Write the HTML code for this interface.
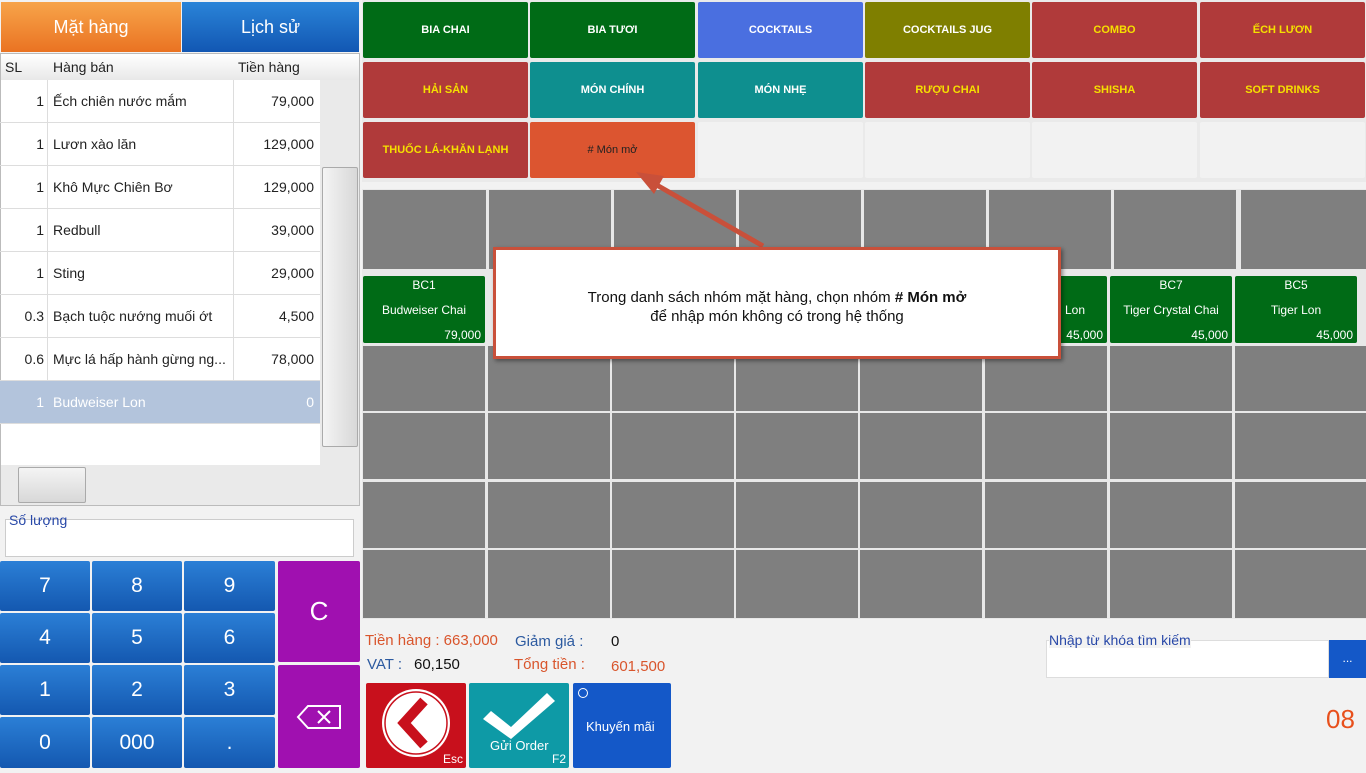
<!DOCTYPE html>
<html><head><meta charset="utf-8"><style>
*{box-sizing:border-box;margin:0;padding:0}
body{width:1366px;height:768px;background:#f2f2f2;position:relative;overflow:hidden;font-family:"Liberation Sans","DejaVu Sans",sans-serif}
.a{position:absolute}
.tab{display:flex;align-items:center;justify-content:center;color:#fff;font-size:18px}
.cat{position:absolute;width:165px;height:56px;display:flex;align-items:center;justify-content:center;font-size:11px;font-weight:bold;text-align:center;border-radius:2px}
.row{position:absolute;left:0;width:320px;height:43px;border-bottom:1px solid #ddd;font-size:14px;color:#222}
.row span{position:absolute;top:13px}
.k{position:absolute;width:90px;height:50px;background:linear-gradient(#2b7fd6,#1458b0);color:#fff;font-size:21px;display:flex;align-items:center;justify-content:center;border-radius:2px}
.it{position:absolute;width:122px;height:67px;background:#006b16;color:#fff;font-size:12px;border-radius:2px}
.it div{position:absolute;width:100%;text-align:center}
</style></head><body>
<div class="a tab" style="left:1px;top:2px;width:180px;height:50px;background:linear-gradient(#f7a44a,#ea7322)">Mặt hàng</div>
<div class="a tab" style="left:182px;top:2px;width:177px;height:50px;background:linear-gradient(#2a84d8,#1257b3)">Lịch sử</div>
<div class="a" style="left:0;top:53px;width:360px;height:453px;background:#fff;border:1px solid #bbb"></div>
<div class="a" style="left:1px;top:54px;width:358px;height:26px;background:linear-gradient(#fff,#e8e8e8);font-size:14px;color:#222">
<span class="a" style="left:4px;top:5px">SL</span><span class="a" style="left:52px;top:5px">Hàng bán</span><span class="a" style="left:237px;top:5px">Tiền hàng</span></div>
<div class="a" style="left:47px;top:80px;width:1px;height:344px;background:#ddd"></div>
<div class="a" style="left:233px;top:80px;width:1px;height:344px;background:#ddd"></div>
<div class="row" style="top:80px"><span style="right:276px">1</span><span style="left:53px">Ếch chiên nước mắm</span><span style="right:6px">79,000</span></div>
<div class="row" style="top:123px"><span style="right:276px">1</span><span style="left:53px">Lươn xào lăn</span><span style="right:6px">129,000</span></div>
<div class="row" style="top:166px"><span style="right:276px">1</span><span style="left:53px">Khô Mực Chiên Bơ</span><span style="right:6px">129,000</span></div>
<div class="row" style="top:209px"><span style="right:276px">1</span><span style="left:53px">Redbull</span><span style="right:6px">39,000</span></div>
<div class="row" style="top:252px"><span style="right:276px">1</span><span style="left:53px">Sting</span><span style="right:6px">29,000</span></div>
<div class="row" style="top:295px"><span style="right:276px">0.3</span><span style="left:53px">Bạch tuộc nướng muối ớt</span><span style="right:6px">4,500</span></div>
<div class="row" style="top:338px"><span style="right:276px">0.6</span><span style="left:53px">Mực lá hấp hành gừng ng...</span><span style="right:6px">78,000</span></div>
<div class="row" style="top:381px;background:#b3c4dc;color:#fff"><span style="right:276px">1</span><span style="left:53px">Budweiser Lon</span><span style="right:6px">0</span></div>
<div class="a" style="left:320px;top:80px;width:39px;height:425px;background:#eaeaea"></div>
<div class="a" style="left:322px;top:167px;width:36px;height:280px;background:linear-gradient(90deg,#f4f4f4,#d8d8d8);border:1px solid #aaa;border-radius:2px"></div>
<div class="a" style="left:1px;top:465px;width:319px;height:40px;background:#eaeaea"></div>
<div class="a" style="left:18px;top:467px;width:68px;height:36px;background:linear-gradient(#f4f4f4,#d8d8d8);border:1px solid #aaa;border-radius:2px"></div>
<div class="a" style="left:5px;top:519px;width:349px;height:38px;background:#fff;border:1px solid #ccc"></div>
<div class="a" style="left:9px;top:512px;font-size:14px;color:#2848a8">Số lượng</div>
<div class="k" style="left:0;top:561px">7</div><div class="k" style="left:92px;top:561px">8</div><div class="k" style="left:184px;top:561px;width:91px">9</div>
<div class="k" style="left:0;top:613px">4</div><div class="k" style="left:92px;top:613px">5</div><div class="k" style="left:184px;top:613px;width:91px">6</div>
<div class="k" style="left:0;top:665px">1</div><div class="k" style="left:92px;top:665px">2</div><div class="k" style="left:184px;top:665px;width:91px">3</div>
<div class="k" style="left:0;top:717px;height:51px">0</div><div class="k" style="left:92px;top:717px;height:51px">000</div><div class="k" style="left:184px;top:717px;width:91px;height:51px">.</div>
<div class="k" style="left:278px;top:561px;width:82px;height:101px;background:#a010b0;font-size:26px">C</div>
<div class="k" style="left:278px;top:665px;width:82px;height:103px;background:#a010b0"><svg width="46" height="26"><path d="M2 13 L12 2 H44 V24 H12 Z" fill="none" stroke="#fff" stroke-width="2"/><path d="M22 7 L34 19 M34 7 L22 19" stroke="#fff" stroke-width="2"/></svg></div>

<div class="a" style="left:362px;top:0;width:1004px;height:182px;background:#eaeaea"></div>
<div class="cat" style="left:363px;top:2px;background:#006b16;color:#fff">BIA CHAI</div>
<div class="cat" style="left:530px;top:2px;background:#006b16;color:#fff">BIA TƯƠI</div>
<div class="cat" style="left:698px;top:2px;background:#4a6fe0;color:#fff">COCKTAILS</div>
<div class="cat" style="left:865px;top:2px;background:#7f7f00;color:#fff">COCKTAILS JUG</div>
<div class="cat" style="left:1032px;top:2px;background:#b03a3a;color:#f5e000">COMBO</div>
<div class="cat" style="left:1200px;top:2px;background:#b03a3a;color:#f5e000">ẾCH LƯƠN</div>
<div class="cat" style="left:363px;top:62px;background:#b03a3a;color:#f5e000">HẢI SẢN</div>
<div class="cat" style="left:530px;top:62px;background:#0e8f8f;color:#fff">MÓN CHÍNH</div>
<div class="cat" style="left:698px;top:62px;background:#0e8f8f;color:#fff">MÓN NHẸ</div>
<div class="cat" style="left:865px;top:62px;background:#b03a3a;color:#f5e000">RƯỢU CHAI</div>
<div class="cat" style="left:1032px;top:62px;background:#b03a3a;color:#f5e000">SHISHA</div>
<div class="cat" style="left:1200px;top:62px;background:#b03a3a;color:#f5e000">SOFT DRINKS</div>
<div class="cat" style="left:363px;top:122px;background:#b03a3a;color:#f5e000">THUỐC LÁ-KHĂN LẠNH</div>
<div class="cat" style="left:530px;top:122px;background:#dc5530;color:#222;font-weight:normal;font-size:11px">#  Món mở</div>
<div class="cat" style="left:698px;top:122px;background:#f2f2f2"></div>
<div class="cat" style="left:865px;top:122px;background:#f2f2f2"></div>
<div class="cat" style="left:1032px;top:122px;background:#f2f2f2"></div>
<div class="cat" style="left:1200px;top:122px;background:#f2f2f2"></div>

<div class="a" style="left:362px;top:189px;width:1004px;height:430px;background:#e8e8e8"></div>
<svg class="a" style="left:362px;top:189px" width="1004" height="430">
<g fill="#7f7f7f">
<rect x="1" y="1" width="123" height="79"/><rect x="127" y="1" width="122" height="79"/><rect x="252" y="1" width="122" height="79"/><rect x="377" y="1" width="122" height="79"/><rect x="502" y="1" width="122" height="79"/><rect x="627" y="1" width="122" height="79"/><rect x="752" y="1" width="122" height="79"/><rect x="879" y="1" width="125" height="79"/>
<rect x="1" y="157" width="122" height="65"/><rect x="126" y="157" width="122" height="65"/><rect x="250" y="157" width="122" height="65"/><rect x="374" y="157" width="122" height="65"/><rect x="498" y="157" width="122" height="65"/><rect x="623" y="157" width="122" height="65"/><rect x="748" y="157" width="122" height="65"/><rect x="873" y="157" width="131" height="65"/>
<rect x="1" y="224" width="122" height="66"/><rect x="126" y="224" width="122" height="66"/><rect x="250" y="224" width="122" height="66"/><rect x="374" y="224" width="122" height="66"/><rect x="498" y="224" width="122" height="66"/><rect x="623" y="224" width="122" height="66"/><rect x="748" y="224" width="122" height="66"/><rect x="873" y="224" width="131" height="66"/>
<rect x="1" y="293" width="122" height="66"/><rect x="126" y="293" width="122" height="66"/><rect x="250" y="293" width="122" height="66"/><rect x="374" y="293" width="122" height="66"/><rect x="498" y="293" width="122" height="66"/><rect x="623" y="293" width="122" height="66"/><rect x="748" y="293" width="122" height="66"/><rect x="873" y="293" width="131" height="66"/>
<rect x="1" y="361" width="122" height="68"/><rect x="126" y="361" width="122" height="68"/><rect x="250" y="361" width="122" height="68"/><rect x="374" y="361" width="122" height="68"/><rect x="498" y="361" width="122" height="68"/><rect x="623" y="361" width="122" height="68"/><rect x="748" y="361" width="122" height="68"/><rect x="873" y="361" width="131" height="68"/>
</g></svg>
<div class="it" style="left:363px;top:276px"><div style="top:2px">BC1</div><div style="top:27px">Budweiser Chai</div><div style="top:52px;text-align:right;padding-right:4px">79,000</div></div>
<div class="it" style="left:985px;top:276px"><div style="top:27px;text-align:left;padding-left:80px">Lon</div><div style="top:52px;text-align:right;padding-right:4px">45,000</div></div>
<div class="it" style="left:1110px;top:276px"><div style="top:2px">BC7</div><div style="top:27px">Tiger Crystal Chai</div><div style="top:52px;text-align:right;padding-right:4px">45,000</div></div>
<div class="it" style="left:1235px;top:276px"><div style="top:2px">BC5</div><div style="top:27px">Tiger Lon</div><div style="top:52px;text-align:right;padding-right:4px">45,000</div></div>

<svg class="a" style="left:620px;top:160px" width="160" height="100"><path d="M143 86 L28 20" stroke="#c9503a" stroke-width="5"/><path d="M16 12 L44 16 L34 34 Z" fill="#c9503a"/></svg>
<div class="a" style="left:493px;top:247px;width:568px;height:112px;background:#fff;border:3px solid #c9503a;box-shadow:2px 2px 4px rgba(0,0,0,.4);text-align:center;font-size:15px;color:#111;padding-top:38px;line-height:19px">Trong danh sách nhóm mặt hàng, chọn nhóm <b># Món mở</b><br>để nhập món không có trong hệ thống</div>

<div class="a" style="left:365px;top:632px;font-size:15px;color:#d9552c">Tiền hàng : 663,000</div>
<div class="a" style="left:515px;top:633px;font-size:15px;color:#2c5aa0">Giảm giá :</div>
<div class="a" style="left:611px;top:633px;font-size:15px;color:#111">0</div>
<div class="a" style="left:367px;top:656px;font-size:15px;color:#2c5aa0">VAT :</div>
<div class="a" style="left:414px;top:656px;font-size:15px;color:#111">60,150</div>
<div class="a" style="left:514px;top:656px;font-size:15px;color:#d9552c">Tổng tiền :</div>
<div class="a" style="left:611px;top:658px;font-size:15px;color:#d9552c">601,500</div>
<div class="a" style="left:366px;top:683px;width:100px;height:85px;background:#c8101c;border-radius:2px">
<svg width="100" height="85"><circle cx="50" cy="40" r="34" fill="#fff"/><circle cx="50" cy="40" r="31" fill="none" stroke="#c8101c" stroke-width="1.5"/><path d="M58 18 L38 40 L58 62" fill="none" stroke="#c8101c" stroke-width="10"/></svg>
<span class="a" style="right:3px;bottom:2px;color:#fff;font-size:12px">Esc</span></div>
<div class="a" style="left:469px;top:683px;width:100px;height:85px;background:#0e9aa6;border-radius:2px">
<svg width="100" height="60"><path d="M22 28 L42 44 L78 10 L86 18 L42 56 L14 36 Z" fill="#fff"/></svg>
<span class="a" style="left:21px;top:55px;color:#fff;font-size:13px">Gửi Order</span>
<span class="a" style="right:3px;bottom:2px;color:#fff;font-size:12px">F2</span></div>
<div class="a" style="left:573px;top:683px;width:98px;height:85px;background:#1458c8;border-radius:2px">
<span class="a" style="left:5px;top:5px;width:10px;height:10px;border:1px solid #fff;border-radius:50%"></span>
<span class="a" style="left:13px;top:36px;color:#fff;font-size:13px">Khuyến mãi</span></div>

<div class="a" style="left:1046px;top:640px;width:283px;height:38px;background:#fff;border:1px solid #ddd"></div>
<div class="a" style="left:1049px;top:632px;font-size:14px;color:#2848a8;background:#f2f2f2">Nhập từ khóa tìm kiếm</div>
<div class="a" style="left:1329px;top:640px;width:37px;height:38px;background:#1458c8;color:#fff;font-size:12px;text-align:center;line-height:36px">...</div>
<div class="a" style="left:1326px;top:704px;font-size:26px;color:#e8501c">08</div>
</body></html>
